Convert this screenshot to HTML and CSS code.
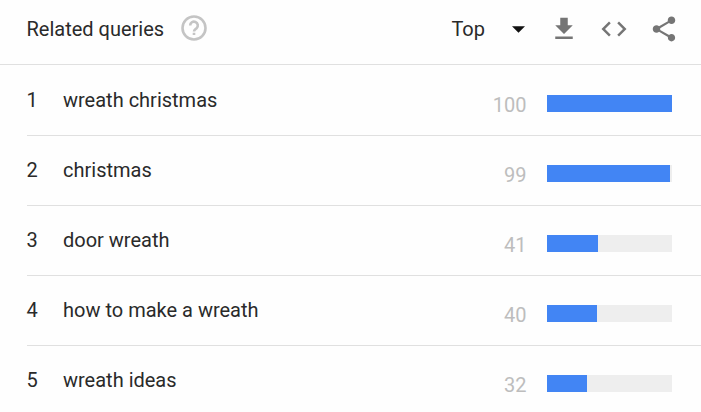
FILE: index.html
```html
<!DOCTYPE html>
<html lang="en">
<head>
  <meta charset="UTF-8" />
  <title>Related queries</title>
  <link rel="stylesheet" href="styles.css">
</head>
<body>
<div class="widget">
  <header class="widget-header">
    <h2 class="widget-title">Related queries</h2>
    <svg class="icon-help" viewBox="0 0 26 26"><circle cx="13" cy="13" r="11.500"/><path d="M9.200 10.500a3.800 3.800 0 1 1 6.400 2.700c-1.600 1.200-2.600 1.700-2.600 3.300M13 17.800v2.200"/></svg>
    <div class="sort">
      <span>Top</span>
      <svg class="icon-caret" viewBox="0 0 14 7"><path d="M0 0h14L7 7z"/></svg>
    </div>
    <div class="actions">
      <svg viewBox="0 0 24 24"><path d="M19 9h-4V3H9v6H5l7 7 7-7zM5 18v2h14v-2H5z"/></svg>
      <svg viewBox="0 0 24 24"><path d="M9.400 16.600L4.800 12l4.600-4.600L8 6l-6 6 6 6 1.400-1.400zm5.200 0l4.600-4.600-4.600-4.600L16 6l6 6-6 6-1.400-1.400z"/></svg>
      <svg viewBox="0 0 24 24"><path d="M18 16.080c-.76 0-1.440.3-1.960.77L8.910 12.700c.05-.23.09-.46.09-.7s-.04-.47-.09-.7l7.050-4.110c.54.5 1.250.81 2.040.81 1.660 0 3-1.340 3-3s-1.340-3-3-3-3 1.340-3 3c0 .24.04.47.09.7L8.040 9.810C7.500 9.310 6.790 9 6 9c-1.660 0-3 1.340-3 3s1.340 3 3 3c.79 0 1.500-.31 2.040-.81l7.120 4.160c-.05.21-.08.43-.08.65 0 1.610 1.310 2.920 2.920 2.920s2.920-1.310 2.920-2.920-1.310-2.920-2.920-2.920z"/></svg>
    </div>
  </header>

  <ol class="query-list">
    <li class="query">
      <span class="rank">1</span>
      <span class="term">wreath christmas</span>
      <span class="value">100</span>
      <div class="bar"><div class="bar-fill" style="width:125px"></div></div>
    </li>
    <li class="query">
      <span class="rank">2</span>
      <span class="term">christmas</span>
      <span class="value">99</span>
      <div class="bar"><div class="bar-fill" style="width:123px"></div></div>
    </li>
    <li class="query">
      <span class="rank">3</span>
      <span class="term">door wreath</span>
      <span class="value">41</span>
      <div class="bar"><div class="bar-fill" style="width:51px"></div></div>
    </li>
    <li class="query">
      <span class="rank">4</span>
      <span class="term">how to make a wreath</span>
      <span class="value">40</span>
      <div class="bar"><div class="bar-fill" style="width:50px"></div></div>
    </li>
    <li class="query">
      <span class="rank">5</span>
      <span class="term">wreath ideas</span>
      <span class="value">32</span>
      <div class="bar"><div class="bar-fill" style="width:40px"></div></div>
    </li>
  </ol>
</div>
</body>
</html>
```
FILE: styles.css
```css
:root {
  --text: #2a2a2a;
  --muted: #bdbdbd;
  --icon: #757575;
  --line: #e0e0e0;
  --track: #eeeeee;
  --blue: #4285f4;
}

*, *::before, *::after { box-sizing: border-box; }
body {
  margin: 0;
  overflow: hidden;
  font-family: Roboto, "Liberation Sans", sans-serif;
  font-size: 20px;
  line-height: 24px;
  color: var(--text);
  background: #fefefe;
}
svg { display: block; fill: currentColor; }

/* ===== Header ===== */
.widget-header {
  display: flex;
  align-items: center;
  height: 65px;
  padding: 0 22px 7px 26.5px;
  border-bottom: 1px solid var(--line);
}
.widget-title { margin: 0; font-size: 20px; font-weight: 400; }
.icon-help {
  width: 26px;
  height: 26px;
  margin: 0 0 1px 17px;
  fill: none;
  stroke: #c4c4c4;
  stroke-width: 2.6;
}
.sort { display: flex; align-items: center; gap: 27px; margin-left: auto; }
.icon-caret { width: 13px; height: 7px; margin-top: 1px; color: #111; }
.actions { display: flex; gap: 20px; margin: 1px 0 0 24px; color: var(--icon); }
.actions svg { width: 30px; height: 30px; }

/* ===== Query rows ===== */
.query-list { margin: 0 0 0 27px; padding: 0; list-style: none; }
.query {
  display: flex;
  align-items: center;
  height: 70px;
  padding: 0 29px 1px 0;
  border-bottom: 1px solid var(--line);
}
.query:first-child { height: 71px; padding-bottom: 0; }
.rank { width: 36.5px; margin-left: -0.5px; }
.term { flex: 1; }
.value { margin-right: 20.5px; padding-top: 10px; color: var(--muted); }
.bar { width: 125px; height: 17px; margin-top: 7px; background: var(--track); }
.bar-fill { height: 100%; background: var(--blue); }
```
